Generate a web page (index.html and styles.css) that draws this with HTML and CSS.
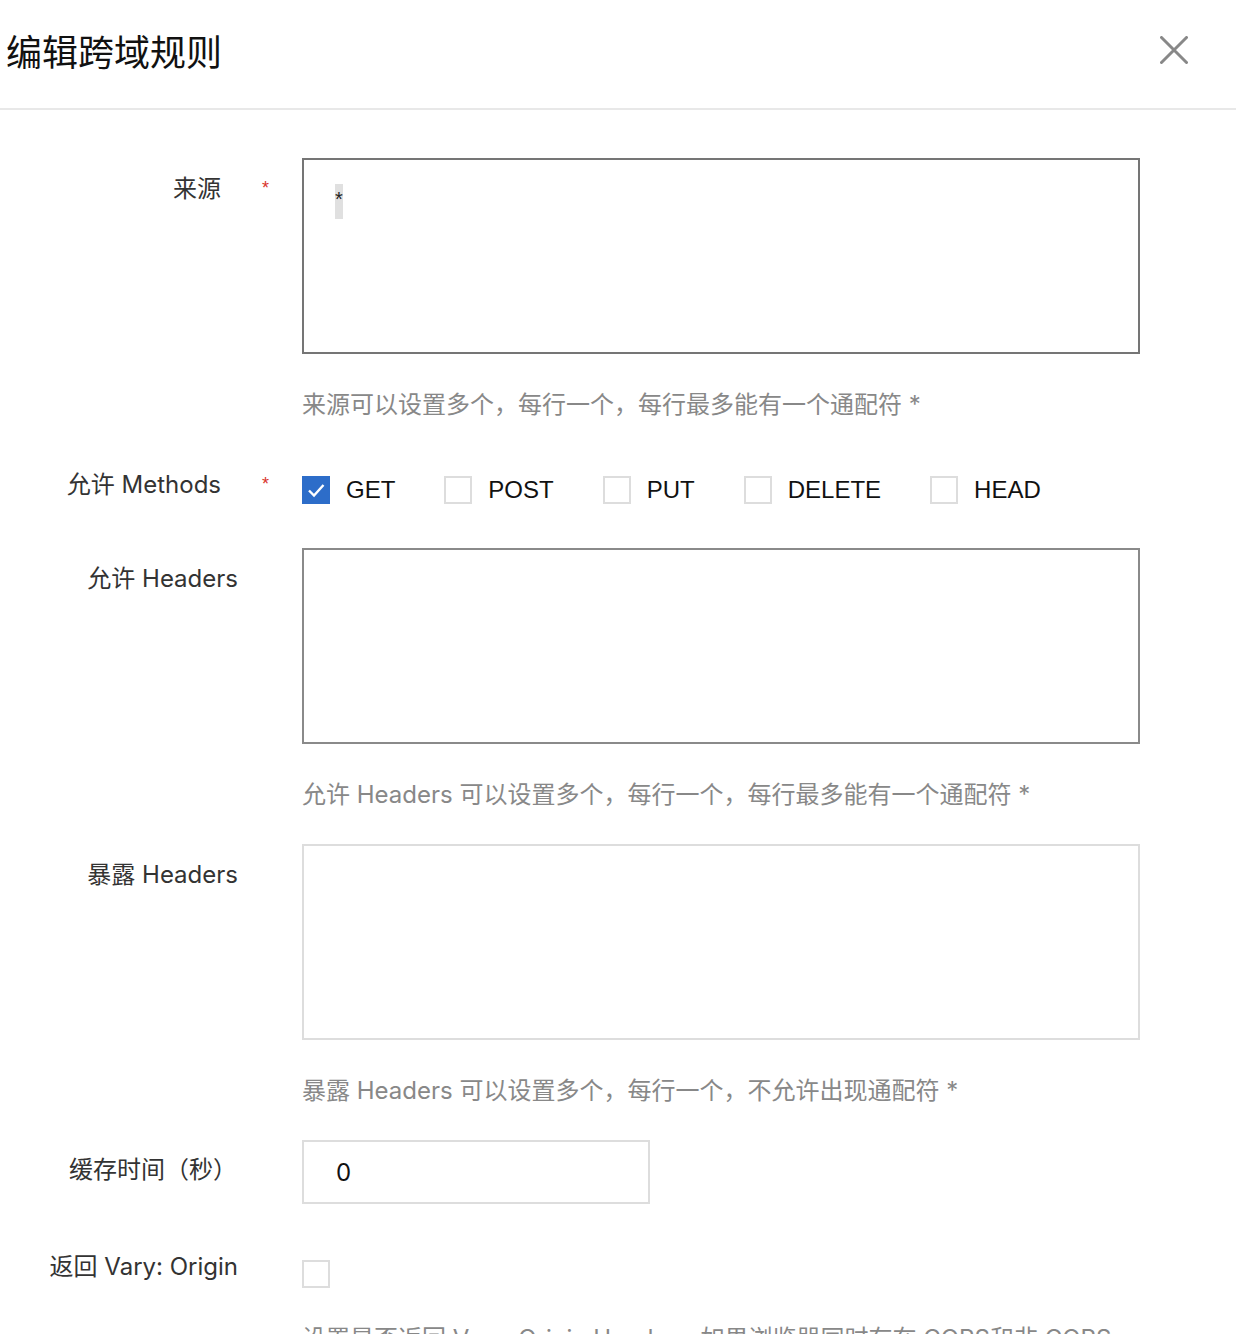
FILE: index.html
```html
<!DOCTYPE html>
<html>
<head>
    <title>编辑跨域规则</title>
    <link rel="stylesheet" href="styles.css">
</head>
<body>

<div class="dialog">
    <div class="dialog-header">
        <h2 class="dialog-title">编辑跨域规则</h2>
        <span class="close">
            <svg width="28" height="28" viewBox="0 0 28 28">
                <path d="M1.5 1.5 L26.5 26.5 M26.5 1.5 L1.5 26.5" stroke="#888" stroke-width="3" stroke-linecap="round" fill="none"/>
            </svg>
        </span>
    </div>

    <form class="dialog-body">
        <!-- Источник -->
        <div class="form-row">
            <label class="form-label required">来源<span class="star">*</span></label>
            <div class="form-control">
                <div class="textarea active"><span class="selected">*</span></div>
                <p class="help">来源可以设置多个，每行一个，每行最多能有一个通配符 *</p>
            </div>
        </div>

        <div class="form-row">
            <label class="form-label required">允许 Methods<span class="star">*</span></label>
            <div class="form-control">
                <div class="checks">
                    <label class="check"><span class="box checked">
                        <svg width="24" height="24" viewBox="0 0 24 24"><path d="M5 12.5 L10 17.5 L19.5 7" stroke="#fff" stroke-width="2.4" fill="none"/></svg>
                    </span>GET</label>
                    <label class="check"><span class="box"></span>POST</label>
                    <label class="check"><span class="box"></span>PUT</label>
                    <label class="check"><span class="box"></span>DELETE</label>
                    <label class="check"><span class="box"></span>HEAD</label>
                </div>
            </div>
        </div>

        <div class="form-row">
            <label class="form-label">允许 Headers</label>
            <div class="form-control">
                <div class="textarea hover"></div>
                <p class="help">允许 Headers 可以设置多个，每行一个，每行最多能有一个通配符 *</p>
            </div>
        </div>

        <div class="form-row">
            <label class="form-label">暴露 Headers</label>
            <div class="form-control">
                <div class="textarea"></div>
                <p class="help">暴露 Headers 可以设置多个，每行一个，不允许出现通配符 *</p>
            </div>
        </div>

        <div class="form-row">
            <label class="form-label cache-label">缓存时间（秒）</label>
            <div class="form-control">
                <div class="input">0</div>
            </div>
        </div>

        <div class="form-row">
            <label class="form-label">返回 Vary: Origin</label>
            <div class="form-control">
                <div class="single-check"><span class="box"></span></div>
                <p class="help wrap">设置是否返回 Vary: Origin Header，如果浏览器同时存在 CORS和非 CORS 请求，请启用此选项。</p>
            </div>
        </div>
    </form>
</div>

</body>
</html>
```

FILE: styles.css
```css
body {
    margin: 0;
    padding: 0;
    background-color: #fff;
    font-family: Inter, "Noto Sans CJK SC", sans-serif;
    color: #333;
}

.dialog {
    width: 1236px;
}

.dialog-header {
    height: 110px;
    border-bottom: 2px solid #e8e8e8;
    display: flex;
    align-items: center;
    justify-content: space-between;
    padding: 0 48px 8px 6px;
    box-sizing: border-box;
}
.dialog-title {
    margin: 0;
    font-size: 36px;
    font-weight: normal;
    color: #111;
}
.close {
    display: flex;
    width: 28px;
    height: 28px;
    cursor: pointer;
}

.dialog-body {
    padding-top: 48px;
}

.form-row {
    display: grid;
    grid-template-columns: 238px 838px;
    column-gap: 64px;
    margin-bottom: 32px;
}
.form-label {
    position: relative;
    text-align: right;
    padding-top: 14px;
    font-size: 24px;
    line-height: 34px;
    color: #333;
}
.form-label.required {
    padding-right: 17px;
}
.cache-label {
    padding-right: 1px;
    padding-top: 13px;
}
.star {
    position: absolute; /* звездочка справа от подписи */
    left: calc(100% + 24px);
    top: 20px;
    color: #d9342b;
    font-family: "Liberation Sans", sans-serif;
    font-size: 18px;
    line-height: 20px;
}

.textarea {
    height: 196px;
    box-sizing: border-box;
    border: 2px solid #ddd;
    padding: 24px 31px;
    font-size: 20px;
}
.textarea.active {
    border-color: #757575;
}
.textarea.hover {
    border-color: #8a8a8a;
}
.selected {
    display: inline-block;
    width: 8px;
    height: 35px;
    line-height: 30px;
    text-align: center;
    background-color: #e0e0e0;
    color: #222;
    font-family: "Liberation Sans", sans-serif;
}

.help {
    margin: 34px 0 0;
    font-size: 24px;
    line-height: 34px;
    color: #888;
    white-space: nowrap;
}
.help.wrap {
    white-space: normal;
}

.checks {
    display: flex;
    padding: 19px 0 9px;
}
.check {
    display: flex;
    align-items: center;
    gap: 16px;
    margin-right: 49px;
    font-family: "Liberation Sans", sans-serif;
    font-size: 24px;
    line-height: 34px;
    color: #111;
}
.box {
    display: flex;
    align-items: center;
    justify-content: center;
    width: 28px;
    height: 28px;
    box-sizing: border-box;
    border: 2px solid #ddd;
    background-color: #fff;
}
.box.checked {
    background-color: #2d6dc9;
    border-color: #2d6dc9;
}

.input {
    width: 348px;
    height: 64px;
    box-sizing: border-box;
    border: 2px solid #ddd;
    padding-left: 32px;
    font-size: 24px;
    line-height: 62px;
    color: #111;
}

.single-check {
    padding-top: 24px;
}
```
